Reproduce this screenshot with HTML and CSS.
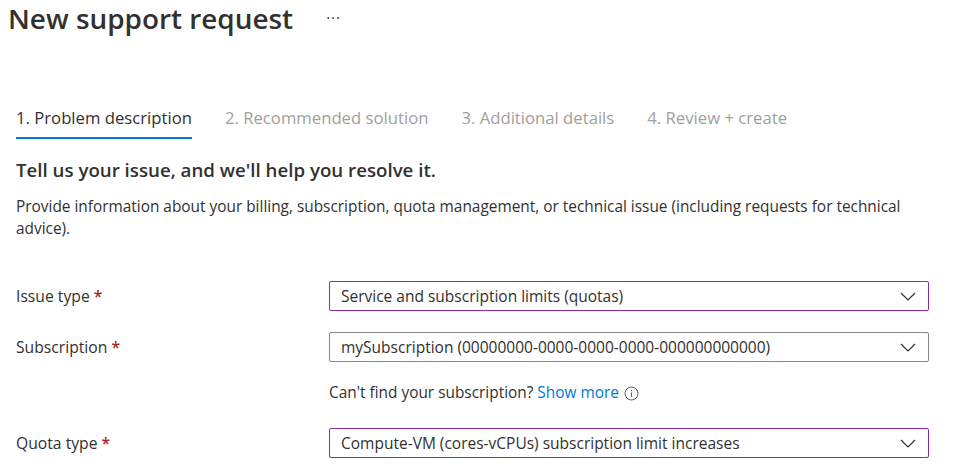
FILE: index.html
```html
<!DOCTYPE html>
<html>
<head>
<meta charset="utf-8">
<link rel="stylesheet" href="styles.css">
</head>
<body>
<div class="page">
  <header class="title-bar">
    <h1 class="title">New support request</h1>
    <span class="more">···</span>
  </header>
  <nav class="tabs">
    <span class="tab active">1. Problem description</span>
    <span class="tab">2. Recommended solution</span>
    <span class="tab">3. Additional details</span>
    <span class="tab">4. Review + create</span>
  </nav>
  <section class="content">
    <h2 class="heading">Tell us your issue, and we'll help you resolve it.</h2>
    <p class="intro">Provide information about your billing, subscription, quota management, or technical issue (including requests for technical advice).</p>
    <div class="form">
      <div class="row">
        <label class="label">Issue type <span class="req">*</span></label>
        <div class="select dirty"><span>Service and subscription limits (quotas)</span><svg class="chev" width="16" height="9" viewBox="0 0 16 9"><path d="M1 1l7 7 7-7" fill="none" stroke="#323130" stroke-width="1.2"/></svg></div>
      </div>
      <div class="row">
        <label class="label">Subscription <span class="req">*</span></label>
        <div class="select"><span>mySubscription (00000000-0000-0000-0000-000000000000)</span><svg class="chev" width="16" height="9" viewBox="0 0 16 9"><path d="M1 1l7 7 7-7" fill="none" stroke="#323130" stroke-width="1.2"/></svg></div>
      </div>
      <div class="row hint-row">
        <div></div>
        <div class="hint">Can't find your subscription? <a class="link">Show more</a> <svg class="info" width="15" height="15" viewBox="0 0 15 15"><circle cx="7.5" cy="7.5" r="6.5" fill="none" stroke="#605e5c" stroke-width="1"/><rect x="7" y="6.4" width="1" height="4.6" fill="#605e5c"/><rect x="7" y="4" width="1" height="1.2" fill="#605e5c"/></svg></div>
      </div>
      <div class="row">
        <label class="label">Quota type <span class="req">*</span></label>
        <div class="select dirty"><span>Compute-VM (cores-vCPUs) subscription limit increases</span><svg class="chev" width="16" height="9" viewBox="0 0 16 9"><path d="M1 1l7 7 7-7" fill="none" stroke="#323130" stroke-width="1.2"/></svg></div>
      </div>
    </div>
  </section>
</div>
</body>
</html>
```
FILE: styles.css
```css
* { box-sizing: border-box; }
body {
  margin: 0;
  background: #fff;
  color: #323130;
  font-family: "Open Sans", "Noto Sans", sans-serif;
  font-size: 15.5px;
}
.page { width: 953px; height: 476px; overflow: hidden; }
.title-bar {
  display: flex;
  align-items: center;
  gap: 33px;
  padding: 0 0 0 8px;
  height: 36px;
}
.title {
  margin: 0;
  font-size: 27.9px;
  line-height: 36px;
  font-weight: 600;
  color: #323130;
}
.more { font-size: 15px; color: #323130; letter-spacing: 1px; margin-top: -2px; }
.tabs {
  display: flex;
  gap: 33px;
  padding: 0 0 0 16px;
  margin-top: 71px;
}
.tab {
  font-size: 16.7px;
  color: #a19f9d;
  padding-bottom: 8px;
  border-bottom: 2px solid transparent;
  line-height: 22px;
}
.tab.active { color: #323130; border-bottom-color: #0078d4; }
.content { padding: 0 16px; }
.heading {
  margin: 18px 0 0;
  font-size: 18.7px;
  font-weight: 600;
  line-height: 26px;
}
.intro {
  margin: 13px 0 0;
  font-size: 15.4px;
  line-height: 22px;
  max-width: 900px;
}
.form {
  display: flex;
  flex-direction: column;
  gap: 21px;
  margin-top: 41px;
}
.row {
  display: grid;
  grid-template-columns: 313px 600px;
  align-items: center;
}
.label { font-size: 15.7px; line-height: 22px; }
.req { color: #a4262c; font-weight: 600; }
.select {
  height: 30px;
  border: 1px solid #8a8886;
  border-radius: 2px;
  display: flex;
  align-items: center;
  justify-content: space-between;
  padding: 0 12px 0 11px;
  font-size: 15.5px;
}
.select.dirty { border-color: #8a2da5; }
.chev { display: block; }
.hint-row { margin: -1px 0 3px; }
.hint {
  display: flex;
  align-items: center;
  gap: 4px;
  line-height: 22px;
  font-size: 15.4px;
}
.link { color: #0078d4; }
.info { margin-left: 1px; }
```
